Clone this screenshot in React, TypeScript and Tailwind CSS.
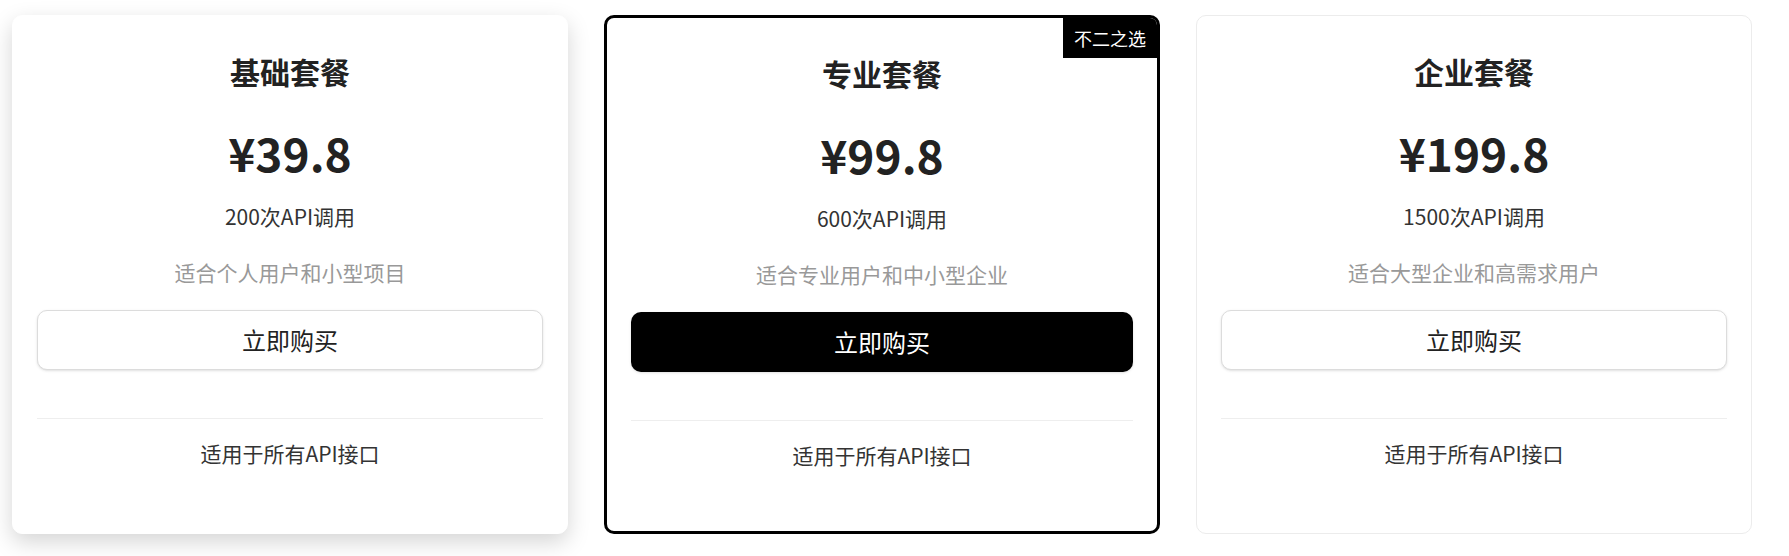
type Plan = {
  name: string;
  price: string;
  calls: string;
  desc: string;
  featured?: boolean;
  variant: "shadow" | "featured" | "plain";
};

const plans: Plan[] = [
  { name: "基础套餐", price: "¥39.8", calls: "200次API调用", desc: "适合个人用户和小型项目", variant: "shadow" },
  { name: "专业套餐", price: "¥99.8", calls: "600次API调用", desc: "适合专业用户和中小型企业", featured: true, variant: "featured" },
  { name: "企业套餐", price: "¥199.8", calls: "1500次API调用", desc: "适合大型企业和高需求用户", variant: "plain" },
];

const cardStyles = {
  shadow: "border border-white shadow-[0_8px_22px_rgba(0,0,0,0.17)]",
  featured: "border-[3px] border-black",
  plain: "border border-[#ececec]",
};

function PlanCard({ plan }: { plan: Plan }) {
  return (
    <div
      className={`relative w-[556px] h-[519px] shrink-0 overflow-hidden rounded-[10px] bg-white px-[24px] pt-[35px] flex flex-col items-center text-center ${cardStyles[plan.variant]}`}
    >
      {plan.featured && (
        <div className="absolute top-0 right-0 h-[40px] px-[11px] flex items-center bg-black text-white text-[18px] leading-none">
          不二之选
        </div>
      )}
      <h3 className="text-[30px] leading-[40px] font-bold text-[#222]">{plan.name}</h3>
      <div className="mt-[33px] text-[46px] leading-[56px] font-bold text-[#222]">{plan.price}</div>
      <p className="mt-[21px] text-[21px] leading-[30px] text-[#333]">{plan.calls}</p>
      <p className="mt-[25px] text-[21px] leading-[32px] text-[#999]">{plan.desc}</p>
      <button
        className={`mt-[22px] w-full h-[60px] rounded-[10px] text-[24px] shadow-sm ${
          plan.featured ? "bg-black text-white" : "bg-white text-[#222] border border-[#dcdcdc]"
        }`}
      >
        立即购买
      </button>
      <div className="mt-[48px] w-full h-px bg-[#eeeeee]" />
      <p className="mt-[19px] text-[21px] leading-[30px] text-[#333]">适用于所有API接口</p>
    </div>
  );
}

export default function App() {
  return (
    <div
      className="min-h-screen bg-white pl-[12px] pt-[15px]"
      style={{ fontFamily: '"Noto Sans CJK SC", "Noto Sans", sans-serif' }}
    >
      <div className="flex gap-[36px]">
        {plans.map((p) => (
          <PlanCard key={p.name} plan={p} />
        ))}
      </div>
    </div>
  );
}
